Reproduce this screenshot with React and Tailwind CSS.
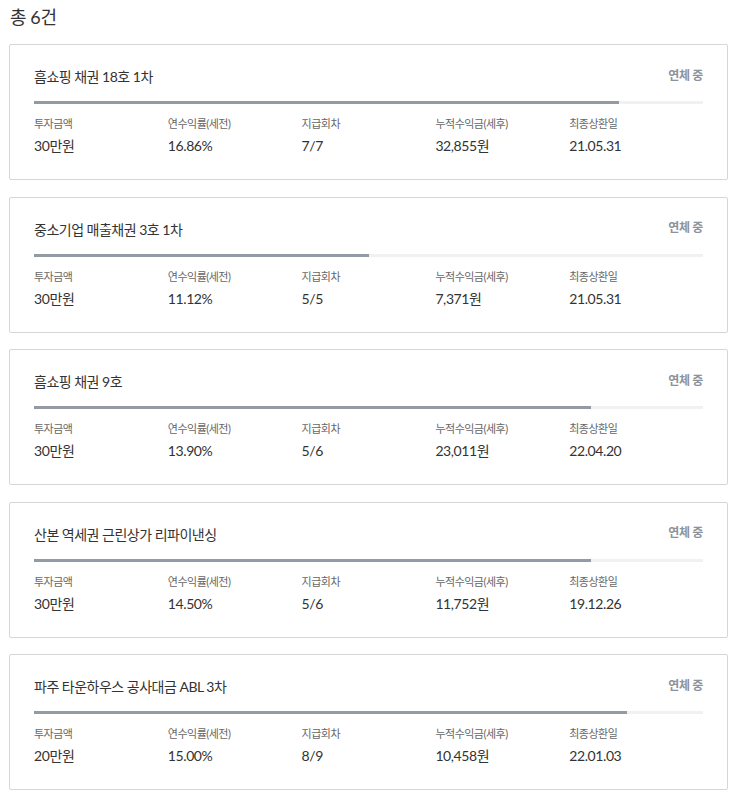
import React from "react";

const items = [
  { title: "흠쇼핑 채권 18호 1차", pct: 87.5, amount: "30만원", rate: "16.86%", count: "7/7", profit: "32,855원", date: "21.05.31" },
  { title: "중소기업 매출채권 3호 1차", pct: 50.1, amount: "30만원", rate: "11.12%", count: "5/5", profit: "7,371원", date: "21.05.31" },
  { title: "흠쇼핑 채권 9호", pct: 83.3, amount: "30만원", rate: "13.90%", count: "5/6", profit: "23,011원", date: "22.04.20" },
  { title: "산본 역세권 근린상가 리파이낸싱", pct: 83.3, amount: "30만원", rate: "14.50%", count: "5/6", profit: "11,752원", date: "19.12.26" },
  { title: "파주 타운하우스 공사대금 ABL 3차", pct: 88.7, amount: "20만원", rate: "15.00%", count: "8/9", profit: "10,458원", date: "22.01.03" },
];

function Cell({ label, value }) {
  return (
    <div className="flex flex-col">
      <div className="text-[11px] leading-[14px] text-[#666] tracking-[-0.5px]">{label}</div>
      <div className="mt-[6px] text-[14px] leading-[18px] text-[#333] tracking-[-0.4px]">{value}</div>
    </div>
  );
}

export default function App() {
  return (
    <div
      className="w-[738px] bg-white pl-[9px] pr-[10px] pb-[6px]"
      style={{ fontFamily: "Lato, 'Noto Sans CJK KR', sans-serif" }}
    >
      <div className="pt-[5px] h-[44px] pl-[1px] text-[18px] leading-[24px] text-[#333] tracking-[-0.4px]">총 6건</div>
      <div className="flex flex-col gap-[16.5px]">
        {items.map((it, i) => (
          <div key={i} className="border border-[#d6d6d6] rounded-[2px] px-6 pt-6 pb-6">
            <div className="flex items-center justify-between h-[16px]">
              <div className="text-[14px] leading-[16px] text-[#333] tracking-[-0.5px]">{it.title}</div>
              <div className="text-[12px] leading-[16px] font-bold text-[#8d939c] -mt-[3px] tracking-[-0.3px]">연체 중</div>
            </div>
            <div className="mt-4 h-[3px] bg-[#f1f1f1] w-full">
              <div className="h-full bg-[#939aa6]" style={{ width: `${it.pct}%` }} />
            </div>
            <div className="mt-[13px] grid grid-cols-5">
              <Cell label="투자금액" value={it.amount} />
              <Cell label="연수익률(세전)" value={it.rate} />
              <Cell label="지급회차" value={it.count} />
              <Cell label="누적수익금(세후)" value={it.profit} />
              <Cell label="최종상환일" value={it.date} />
            </div>
          </div>
        ))}
      </div>
    </div>
  );
}
